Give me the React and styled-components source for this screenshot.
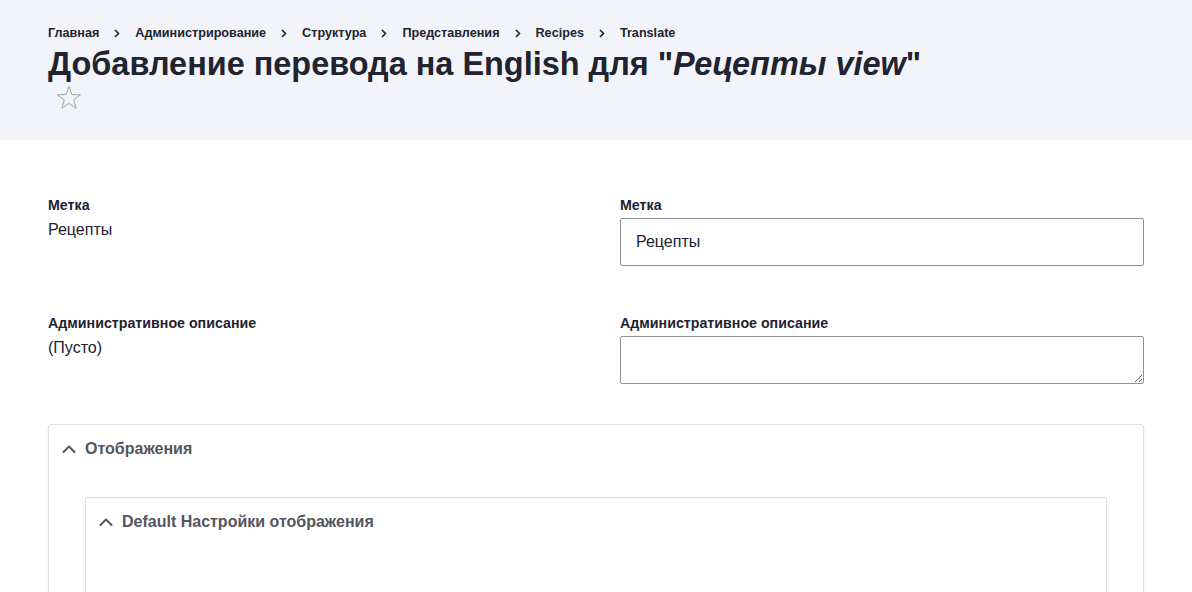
import React from 'react'
import styled, { createGlobalStyle } from 'styled-components'

const Global = createGlobalStyle`
  html, body { margin: 0; padding: 0; }
  body {
    background: #fff;
    color: #222330;
    font-family: "Liberation Sans", Arial, sans-serif;
  }
  * { box-sizing: border-box; }
`

const crumbs = ['Главная', 'Администрирование', 'Структура', 'Представления', 'Recipes', 'Translate']

const Header = styled.header`
  background: #f3f4f9;
  padding: 25px 48px 0;
  height: 140px;
`

const Crumbs = styled.nav`
  display: flex;
  align-items: center;
  font-size: 12.64px;
  font-weight: bold;
  line-height: 16px;
  color: #222330;
`

const Sep = styled.span`
  display: inline-flex;
  padding: 0 15px 0 15px;
  color: #222330;
`

const Title = styled.h1`
  margin: 3px 0 0;
  font-size: 32.45px;
  line-height: 40px;
  font-weight: bold;
  em { font-style: italic; }
`

const Star = styled.div`
  margin: 1px 0 0 8px;
  width: 26px;
  height: 26px;
`

const Main = styled.main`
  padding: 56px 48px 0;
`

const Row = styled.div`
  display: grid;
  grid-template-columns: 1fr 1fr;
  column-gap: 48px;
  margin-bottom: ${p => p.$gap || 48}px;
`

const Field = styled.div`
  display: flex;
  flex-direction: column;
`

const Label = styled.label`
  font-size: 14.22px;
  font-weight: bold;
  line-height: 18px;
  margin-bottom: 4px;
`

const Value = styled.div`
  font-size: 16px;
  line-height: 24px;
`

const Input = styled.input`
  height: 48px;
  border: 1px solid #8e929c;
  border-radius: 2px;
  padding: 0 15px;
  font: inherit;
  font-size: 16px;
  color: #222330;
  background: #fff;
`

const Textarea = styled.textarea`
  height: 48px;
  border: 1px solid #8e929c;
  border-radius: 2px;
  padding: 8px 15px;
  font: inherit;
  font-size: 16px;
  resize: vertical;
  display: block;
`

const Details = styled.div`
  border: 1px solid #dedfe4;
  border-radius: 2px;
  box-shadow: 0 2px 4px rgba(0, 0, 0, 0.08);
  background: #fff;
  ${p => p.$outer && 'height: 200px;'}
`

const Summary = styled.div`
  display: flex;
  align-items: center;
  padding: 16px 16px 16px 13px;
  font-size: 16px;
  line-height: 16px;
  font-weight: bold;
  color: #545560;
  svg { margin-right: 9px; }
`

const Body = styled.div`
  padding: 0 36px;
  margin-top: 24px;
`

const Chevron = () => (
  <svg width="14" height="14" viewBox="0 0 14 14">
    <path d="M1.5 10 L7 4.5 L12.5 10" fill="none" stroke="#545560" strokeWidth="2" strokeLinecap="round" strokeLinejoin="round" />
  </svg>
)

const Arrow = () => (
  <svg width="6" height="9" viewBox="0 0 6 9">
    <path d="M1 1 L4.5 4.5 L1 8" fill="none" stroke="#222330" strokeWidth="1.6" />
  </svg>
)

function App() {
  return (
    <>
      <Global />
      <Header>
        <Crumbs>
          {crumbs.map((c, i) => (
            <React.Fragment key={c}>
              {i > 0 && <Sep><Arrow /></Sep>}
              <span>{c}</span>
            </React.Fragment>
          ))}
        </Crumbs>
        <Title>
          Добавление перевода на English для "<em>Рецепты view</em>"
        </Title>
        <Star>
          <svg width="26" height="26" viewBox="0 0 26 26">
            <polygon
              points="13,1.5 15.9,9.6 24.5,9.8 17.7,15 20.1,23.3 13,18.4 5.9,23.3 8.3,15 1.5,9.8 10.1,9.6"
              fill="none"
              stroke="#a0a2aa"
              strokeWidth="1"
            />
          </svg>
        </Star>
      </Header>
      <Main>
        <Row>
          <Field>
            <Label>Метка</Label>
            <Value>Рецепты</Value>
          </Field>
          <Field>
            <Label>Метка</Label>
            <Input defaultValue="Рецепты" />
          </Field>
        </Row>
        <Row $gap={40}>
          <Field>
            <Label>Административное описание</Label>
            <Value>(Пусто)</Value>
          </Field>
          <Field>
            <Label>Административное описание</Label>
            <Textarea />
          </Field>
        </Row>
        <Details $outer>
          <Summary><Chevron />Отображения</Summary>
          <Body>
            <Details>
              <Summary><Chevron />Default Настройки отображения</Summary>
              <div style={{ height: 120 }} />
            </Details>
          </Body>
        </Details>
      </Main>
    </>
  )
}

export default App
